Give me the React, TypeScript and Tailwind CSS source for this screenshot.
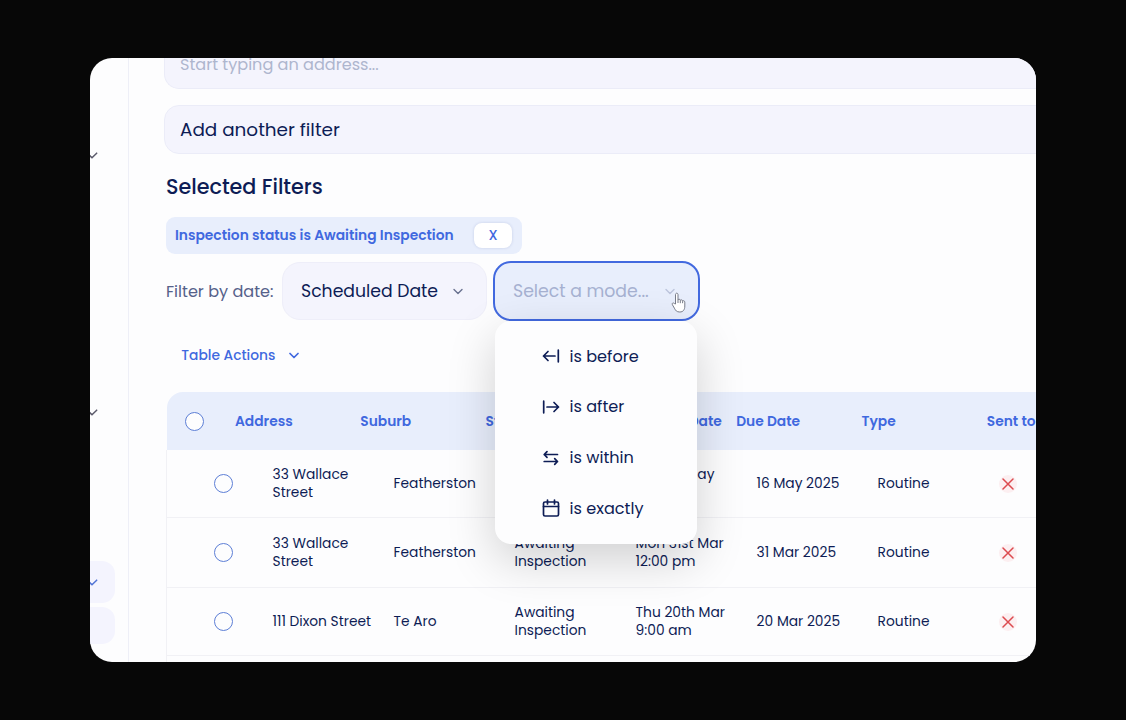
import type { ReactNode } from "react";

function Chevron({ className }: { className: string }) {
  return (
    <svg viewBox="0 0 10 6" className={className} fill="none" stroke="currentColor" strokeLinecap="round" strokeLinejoin="round">
      <path d="M1 1l4 4 4-4" />
    </svg>
  );
}

function Circle() {
  return <span className="block h-[19px] w-[19px] shrink-0 rounded-full border border-[#5d7fd6] bg-[#fdfdfe]" />;
}

function Cross() {
  return (
    <span className="flex h-[18px] w-[18px] items-center justify-center rounded-full bg-[#fceff1]">
      <svg viewBox="0 0 12 12" className="h-3 w-3" stroke="#dc4a4f" strokeWidth="1.5" strokeLinecap="round">
        <path d="M1 1l10 10M11 1L1 11" />
      </svg>
    </span>
  );
}

function MenuIcon({ children }: { children: ReactNode }) {
  return (
    <svg viewBox="0 0 18 18" className="h-[18px] w-[18px] shrink-0" fill="none" stroke="#0d1c55" strokeWidth="1.7" strokeLinecap="round" strokeLinejoin="round">
      {children}
    </svg>
  );
}

const modes: { label: string; icon: ReactNode }[] = [
  { label: "is before", icon: <path d="M13 9H1.5M6 4.5L1.5 9 6 13.5M16.3 3.2v11.6" /> },
  { label: "is after", icon: <path d="M5 9h11.5M12 4.5L16.5 9 12 13.5M1.700 3.2v11.6" /> },
  { label: "is within", icon: <path d="M15.500 5.500H2.200M5 2.700L2.200 5.500 5 8.300M2.200 12.500h13.300M12.700 9.700l2.800 2.800-2.800 2.800" /> },
  {
    label: "is exactly",
    icon: (
      <>
        <rect x="1.500" y="3" width="15" height="14" rx="1.500" />
        <path d="M1.500 7.500h15M5.500 1v4M12.500 1v4" />
      </>
    ),
  },
];

const headers = ["Address", "Suburb", "Status", "Scheduled Date", "Due Date", "Type", "Sent to"];

const rows = [
  { h: "h-[68px]", cells: [["33 Wallace", "Street"], ["Featherston"], ["Awaiting", "Inspection"], ["Fri 16th May", "9:00 am"], ["16 May 2025"], ["Routine"]] },
  { h: "h-[70px]", cells: [["33 Wallace", "Street"], ["Featherston"], ["Awaiting", "Inspection"], ["Mon 31st Mar", "12:00 pm"], ["31 Mar 2025"], ["Routine"]] },
  { h: "h-[68px]", cells: [["111 Dixon Street"], ["Te Aro"], ["Awaiting", "Inspection"], ["Thu 20th Mar", "9:00 am"], ["20 Mar 2025"], ["Routine"]] },
];

export default function App() {
  return (
    <div className="h-[720px] w-[1126px] overflow-hidden bg-[#070707] px-[90px] py-[58px] font-[family-name:Poppins,Inter,sans-serif] whitespace-nowrap text-[#0d1c55]">
      <div className="flex h-[604px] w-[946px] overflow-hidden rounded-[22px] bg-[#fdfdfe]">
        <aside className="flex w-[39px] shrink-0 flex-col border-r border-[#eeeff7]">
          <div className="h-[94px]" />
          <Chevron className="-ml-[4px] h-[7px] w-[12px] stroke-[1.3] text-[#5c5b6c]" />
          <div className="h-[250px]" />
          <Chevron className="-ml-[4px] h-[7px] w-[12px] stroke-[1.3] text-[#5c5b6c]" />
          <div className="mt-[145px] flex h-[42px] w-[25px] shrink-0 items-center rounded-r-[13px] bg-[#f4f4fe]">
            <Chevron className="-ml-[4px] h-[7px] w-[12px] shrink-0 stroke-[1.3] text-[#5275d6]" />
          </div>
          <div className="mt-[4px] h-[37px] w-[25px] shrink-0 rounded-r-[13px] bg-[#f4f4fe]" />
        </aside>

        <main className="ml-[35px] flex w-[872px] shrink-0 flex-col">
          <div className="flex h-[31px] w-[900px] shrink-0 items-start rounded-bl-[15px] border-b border-l border-[#ebecf8] bg-[#f4f4fd] pl-[15px]">
            <span className="-mt-[5px] text-[16.100px] leading-[24px] text-[#aeb6ce]">Start typing an address...</span>
          </div>
          <div className="mt-4 flex h-[49px] w-[900px] shrink-0 items-center rounded-l-[15px] border border-[#ebecf8] bg-[#f4f4fd] pl-[15px] text-[18.400px]">
            Add another filter
          </div>
          <h2 className="mt-[18px] ml-[2px] h-[30px] shrink-0 text-[20.700px] leading-[30px] font-medium">Selected Filters</h2>
          <div className="mt-[15px] ml-[2px] flex h-[37px] w-[356px] shrink-0 items-center justify-between rounded-[9px] bg-[#e8eefc] pr-[10px] pl-[9px] text-[13.800px] font-semibold text-[#4068df]">
            <span className="pt-px">Inspection status is Awaiting Inspection</span>
            <button className="flex h-[25px] w-[38px] items-center justify-center rounded-[8px] bg-white pt-px font-medium shadow-[0_0_3px_rgba(60,80,150,0.2)]">X</button>
          </div>

          <div className="relative mt-[7px] ml-[2px] flex h-[60px] shrink-0 items-center">
            <span className="w-[116px] pt-[2px] text-[16.100px] text-[#56618a]">Filter by date:</span>
            <div className="flex h-[58px] w-[205px] items-center rounded-[18px] border border-[#eeeef9] bg-[#f4f4fd] pl-[18px] text-[17.250px]">
              <span className="w-[152px] pt-[2px]">Scheduled Date</span>
              <Chevron className="h-[7px] w-[10px] stroke-[1.4] text-[#69718f]" />
            </div>
            <div className="ml-[6px] flex h-[60px] w-[207px] items-center rounded-[18px] border-[2.500px] border-[#4269df] bg-[#e8eefc] pl-[18px] text-[17.300px] text-[#a6b1d1]">
              <span className="w-[152px] pt-[2px]">Select a mode...</span>
              <Chevron className="h-[7px] w-[10px] stroke-[1.4] text-[#bcc4dc]" />
            </div>

            <div className="absolute top-[60px] left-[329.400px] z-10 h-[223px] w-[202px] rounded-[16px] bg-[#fdfdfe] pt-[10px] shadow-[0_16px_48px_rgba(0,0,0,0.18)]">
              {modes.map((m) => (
                <div key={m.label} className="flex h-[50.700px] items-center gap-[9.500px] pl-[46.700px] text-[16.100px]">
                  <MenuIcon>{m.icon}</MenuIcon>
                  <span className="pt-px">{m.label}</span>
                </div>
              ))}
            </div>
            <svg viewBox="0 0 16 22" className="absolute top-[31px] left-[505px] z-20 h-[22px] w-4" fill="#fff" stroke="#777b88" strokeWidth="1" strokeLinejoin="round">
              <path d="M4.500 12V2.700c0-2 2.500-2 2.500 0V8c.3-1.200 2.200-1 2.300.4.5-1 2.200-.7 2.300.7.800-.9 2.200-.2 2.200 1V14c0 3.800-1.700 6-5 6-3.300 0-4.200-1.500-5.400-3.800L1.400 12.700c-.8-1.700 1-2.300 1.900-1.200z" />
              <path d="M7 8v3M9.300 8.400v2.800M11.600 9.200v2" />
            </svg>
          </div>

          <div className="mt-[22px] ml-[17.300px] flex h-[24px] shrink-0 items-center text-[13.800px] font-medium text-[#4068df]">
            <span className="w-[107.700px] pt-[2px]">Table Actions</span>
            <Chevron className="h-[7px] w-[10px] stroke-[1.700]" />
          </div>

          <div className="mt-[25px] ml-[2px] flex w-[900px] shrink-0 flex-col">
            <div className="ml-px flex h-[58px] items-center rounded-tl-[16px] bg-[#e8eefc] pl-[18.400px] text-[13.800px] font-semibold text-[#4068df]">
              <Circle />
              <div className="ml-[30.600px] flex pt-[2px]">
                {headers.map((h) => (
                  <span key={h} className="w-[125.300px]">{h}</span>
                ))}
              </div>
            </div>
            {rows.map((r, i) => (
              <div key={i} className={`flex shrink-0 items-center border-b border-l border-[#f1f1f5] pl-[47px] text-[13.800px] leading-[18px] ${r.h}`}>
                <Circle />
                <div className="ml-[39.600px] flex items-center pt-px">
                  {r.cells.map((lines, j) => (
                    <div key={j} className="w-[121px]">
                      {lines.map((line) => (
                        <div key={line}>{line}</div>
                      ))}
                    </div>
                  ))}
                </div>
                <Cross />
              </div>
            ))}
            <div className="h-[8px] border-l border-[#f1f1f5]" />
          </div>
        </main>
      </div>
    </div>
  );
}
